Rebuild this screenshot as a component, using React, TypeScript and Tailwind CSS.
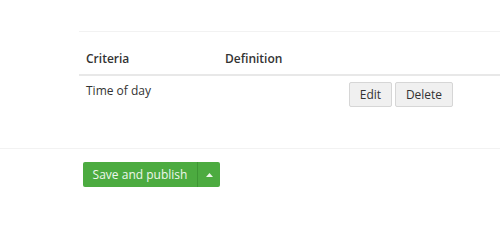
export default function App() {
    return (
        <div className="h-[244px] w-[500px] overflow-hidden bg-white font-['Open_Sans',sans-serif] text-[12px] text-[#333]">
            <div className="pl-[79px] pt-[31px]">
                <div className="border-t border-[#f2f2f2]">
                    <div className="flex h-[44px] items-end border-b-2 border-[#e8e8e8] pb-[6px] font-semibold">
                        <div className="w-[146px] pl-[7px]">Criteria</div>
                        <div>Definition</div>
                    </div>
                    <div className="flex h-[42px] items-start">
                        <div className="w-[270px] pl-[7px] pt-[6px]">Time of day</div>
                        <div className="flex gap-[3px] pt-[6px]">
                            <button className="h-[25px] w-[43px] rounded-[2px] border border-[#d6d6d6] bg-[#f0f0f0] text-[12px] text-[#333]">
                                Edit
                            </button>
                            <button className="h-[25px] w-[58px] rounded-[2px] border border-[#d6d6d6] bg-[#f0f0f0] text-[12px] text-[#333]">
                                Delete
                            </button>
                        </div>
                    </div>
                </div>
            </div>
            <div className="mt-[30px] border-t border-[#f2f2f2] pl-[83px] pt-[13px]">
                <div className="flex h-[25px] w-[137px] overflow-hidden rounded-[2px] bg-[#4cab40]">
                    <button className="w-[115px] border-r border-[#3e9634] text-[12px] text-[#eef7ec]">
                        Save and publish
                    </button>
                    <button className="flex flex-1 items-center justify-center">
                        <svg width="7" height="4" viewBox="0 0 7 4">
                            <path d="M0 4 L3.5 0 L7 4 Z" fill="#eef7ec" />
                        </svg>
                    </button>
                </div>
            </div>
        </div>
    )
}
